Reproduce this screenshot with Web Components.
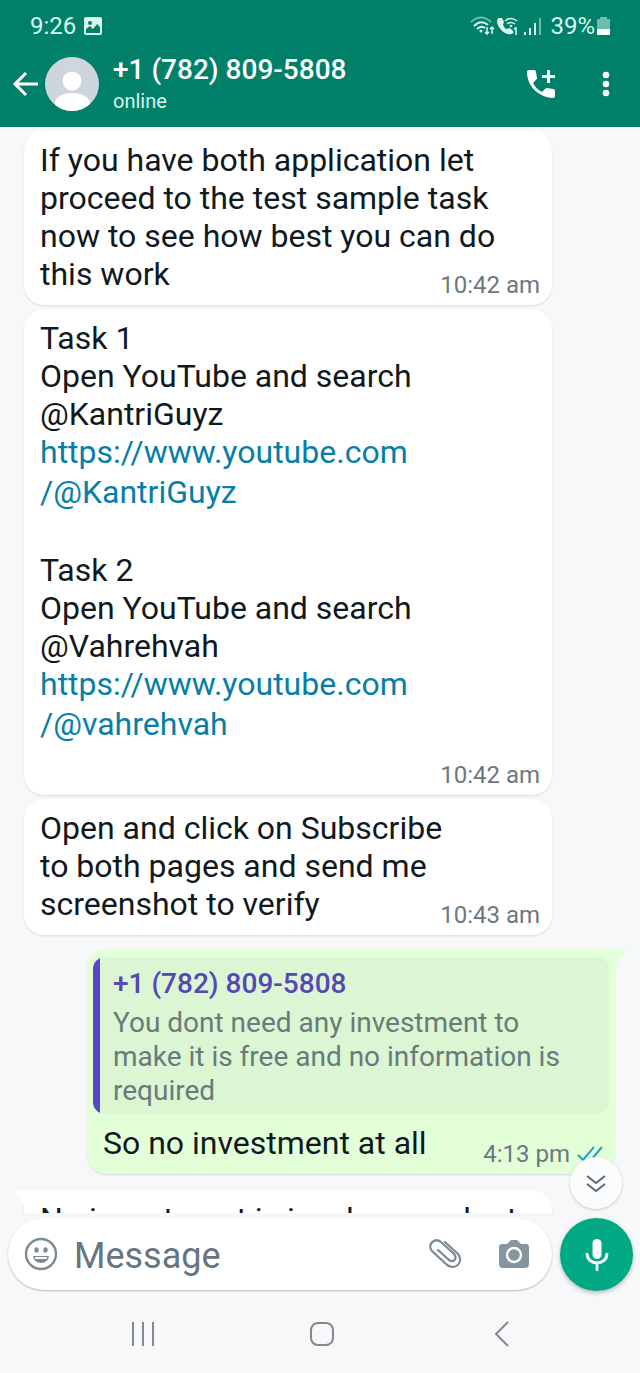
<!DOCTYPE html>
<html lang="en">
<head>
<meta charset="utf-8">
<meta name="viewport" content="width=device-width, initial-scale=1">
<title>Chat</title>
<style>
    body{
        margin:0;
        font-family:Roboto, sans-serif;
        color:#10191e;
        background:#f7f8fa;
    }
</style>
</head>
<body>
<chat-app>
    <status-bar slot="top" data-time="9:26" data-battery="39%"></status-bar>
    <chat-header slot="top" data-name="+1 (782) 809-5808" data-status="online"></chat-header>

    <chat-bubble data-time="10:42 am">If you have both application let<br>proceed to the test sample task<br>now to see how best you can do<br>this work</chat-bubble>
    <chat-bubble data-time="10:42 am" data-below>Task 1<br>Open YouTube and search<br>@KantriGuyz<br><chat-link data-href="https://www.youtube.com/@KantriGuyz">https://www.youtube.com<span slot="rest">/@KantriGuyz</span></chat-link><br>Task 2<br>Open YouTube and search<br>@Vahrehvah<br><chat-link data-href="https://www.youtube.com/@vahrehvah">https://www.youtube.com<span slot="rest">/@vahrehvah</span></chat-link></chat-bubble>
    <chat-bubble data-time="10:43 am">Open and click on Subscribe<br>to both pages and send me<br>screenshot to verify</chat-bubble>
    <chat-bubble data-time="4:13 pm" data-sent data-tail>
        <chat-quote slot="quote" data-name="+1 (782) 809-5808">You dont need any investment to make it is free and no information is required</chat-quote>
        So no investment at all
    </chat-bubble>
    <chat-bubble data-time="4:14 pm" data-tail data-below>No investment is involve you dont</chat-bubble>

    <chat-composer slot="bottom"></chat-composer>
    <nav-bar slot="bottom"></nav-bar>
</chat-app>

<script>
const reset=`
    :host, *{
        box-sizing:border-box;
    }
    button{
        display:flex;
        align-items:center;
        justify-content:center;
        padding:0;
        border:0;
        background:none;
        color:inherit;
        font:inherit;
        cursor:pointer;
    }
    svg{
        display:block;
        flex:none;
    }
`;

class ChatElement extends HTMLElement {
    constructor() {
        super();
        this.attachShadow({mode:'open'});
    }

    connectedCallback() {
        this.shadowRoot.innerHTML=`<style>${reset}</style>${this.getTemplate(this.dataset)}`;
    }
}

class ChatApp extends ChatElement {
    getTemplate() {
        return `
            <style>
                :host{
                    display:flex;
                    flex-direction:column;
                    height:100vh;
                }
                header{
                    flex:none;
                    background:#008069;
                    color:#fff;
                }
                main{
                    position:relative;
                    flex:1;
                    min-height:0;
                }
                .list{
                    display:flex;
                    flex-direction:column;
                    gap:4px;
                    height:100%;
                    padding:4px 24px 0;
                    overflow:hidden;
                }
                /* floats over the message list */
                .down{
                    position:absolute;
                    right:18px;
                    bottom:4px;
                    width:52px;
                    height:52px;
                    border-radius:50%;
                    background:#fbfcfd;
                    box-shadow:0 1px 3px rgba(0,0,0,.2);
                }
                footer{
                    flex:none;
                }
            </style>
            <header><slot name="top"></slot></header>
            <main>
                <div class="list"><slot></slot></div>
                <button class="down" aria-label="Scroll to bottom">
                    <svg width="20" height="20" viewBox="0 0 20 20" fill="none" stroke="#5e6a72" stroke-width="2"><path d="M1 3l9 7 9-7M1 11l9 7 9-7"/></svg>
                </button>
            </main>
            <footer><slot name="bottom"></slot></footer>
        `;
    }
}

class StatusBar extends ChatElement {
    getTemplate(data) {
        return `
            <style>
                :host{
                    display:flex;
                    align-items:center;
                    height:52px;
                    padding:0 30px;
                    font-size:24px;
                    color:#d9f7ef;
                }
                .photo{
                    margin-left:8px;
                }
                .right{
                    display:flex;
                    align-items:center;
                    gap:8px;
                    margin-left:auto;
                }
                .level{
                    display:flex;
                    align-items:center;
                    gap:2px;
                }
            </style>
            <span>${data.time}</span>
            <svg class="photo" width="18" height="18" viewBox="0 0 18 18"><rect width="18" height="18" rx="2" fill="currentColor"/><circle cx="6" cy="6" r="2" fill="#008069"/><path d="M2 12l4-3 3 3 4-5 3 3v6H2z" fill="#008069"/></svg>
            <div class="right">
                <svg width="72" height="20" viewBox="0 0 72 20" fill="none" stroke="currentColor" stroke-width="2">
                    <path d="M1 6Q11-3 21 6" opacity=".5"/><path d="M4 10Q11 3 18 9M7 13Q11 9 15 12"/>
                    <circle cx="11" cy="15" r="1.5" fill="currentColor" stroke="none"/>
                    <path d="M17 11v7M15 16l2 2 2-2M22 18v-7M20 13l2-2 2 2" stroke-width="1.5"/>
                    <path d="M29 2c-3 1-2 6 0 9 3 5 8 8 12 7 2 0 3-2 2-3l-3-3-4 1c-1-1-2-2-3-4l1-3-2-4z" fill="currentColor" stroke="none"/>
                    <path d="M35 5Q41 0 47 5M37 8Q41 5 45 8" stroke-width="1.5"/><circle cx="41" cy="10" r="1.3" fill="currentColor" stroke="none"/>
                    <path d="M44 13l2-1v7" stroke-width="1.5"/>
                    <path d="M55 16v3M60 12v7M65 7v12"/><path d="M70 2v17" opacity=".5"/>
                </svg>
                <div class="level">
                    <span>${data.battery}</span>
                    <svg width="13" height="20" viewBox="0 0 13 20"><path d="M3 1h7v2h3v10H0V3h3z" fill="currentColor" opacity=".5"/><path d="M0 13h13v5q0 1-1 1H1q-1 0-1-1z" fill="#fff"/></svg>
                </div>
            </div>
        `;
    }
}

class ChatHeader extends ChatElement {
    getTemplate(data) {
        return `
            <style>
                :host{
                    display:flex;
                    align-items:center;
                    height:75px;
                    padding:0 18px 12px 12px;
                }
                .avatar{
                    margin-left:6px;
                }
                .who{
                    flex:1;
                    margin-left:14px;
                }
                h1{
                    margin:0;
                    font-size:28px;
                    font-weight:500;
                    line-height:34px;
                }
                p{
                    margin:0;
                    font-size:20px;
                    line-height:28px;
                    color:#d4f5ec;
                }
                .call{
                    margin-right:34px;
                }
                .menu{
                    width:32px;
                    height:40px;
                }
            </style>
            <button aria-label="Back">
                <svg width="27" height="28" viewBox="0 0 27 28" fill="none" stroke="currentColor" stroke-width="3"><path d="M26 14H4M14 3L3 14l11 11"/></svg>
            </button>
            <svg class="avatar" width="54" height="54" viewBox="0 0 54 54">
                <defs><clipPath id="round"><circle cx="27" cy="27" r="27"/></clipPath></defs>
                <g clip-path="url(#round)"><rect width="54" height="54" fill="#cfd5dd"/><circle cx="27" cy="24" r="9.5" fill="#fff"/><path d="M10 50V46c0-6 8-10 17-10s18 4 18 10v8H10z" fill="#fff"/></g>
            </svg>
            <div class="who">
                <h1>${data.name}</h1>
                <p>${data.status}</p>
            </div>
            <button class="call" aria-label="Add call">
                <svg width="30" height="30" viewBox="0 0 30 30" fill="currentColor"><path d="M3 1h5q2 0 2 2l1 6q0 1-1 2l-3 3c2 4 5 7 9 9l3-3q1-1 2-1l6 1q2 0 2 2v5q0 2-2 2C12 28 1 17 1 3q0-2 2-2z"/><path d="M21 1h3v5h5v3h-5v5h-3V9h-5V6h5z"/></svg>
            </button>
            <button class="menu" aria-label="More options">
                <svg width="8" height="28" viewBox="0 0 8 28" fill="currentColor"><circle cx="4" cy="5" r="3.3"/><circle cx="4" cy="14" r="3.3"/><circle cx="4" cy="23" r="3.3"/></svg>
            </button>
        `;
    }
}

class ChatBubble extends ChatElement {
    getTemplate(data) {
        const sent='sent' in data;
        const tail=sent
            ? '<svg class="tail" width="14" height="18" viewBox="0 0 14 18"><path d="M0 0h11q2 0 1 2L0 18z" fill="#e2ffd8"/></svg>'
            : '<svg class="tail" width="14" height="18" viewBox="0 0 14 18"><path d="M14 0H3Q1 0 2 2l12 16z" fill="#fff"/></svg>';
        const ticks='<svg width="26" height="18" viewBox="0 0 26 18" fill="none" stroke="#2f9fc9" stroke-width="2"><path d="M1 10l5 5L17 2M12 13l2 2L25 2"/></svg>';
        return `
            <style>
                :host{
                    position:relative;
                    display:block;
                    flex:none;
                    width:calc(100% - 64px);
                    border-radius:20px;
                    background:#fff;
                    box-shadow:0 1px 2px rgba(0,0,0,.12);
                    font-size:32px;
                    line-height:38px;
                }
                :host([data-sent]){
                    align-self:flex-end;
                    margin:10px 1px 0 0;
                    padding-top:8px;
                    background:#e2ffd8;
                }
                :host([data-sent][data-tail]){
                    border-top-right-radius:0;
                }
                :host([data-tail]:not([data-sent])){
                    margin-top:12px;
                    border-top-left-radius:0;
                }
                .body{
                    display:grid;
                    padding:10px 12px 6px 16px;
                }
                .text, .meta{
                    grid-area:1 / 1;
                }
                .text{
                    padding-bottom:6px;
                }
                .meta{
                    display:flex;
                    align-items:center;
                    gap:7px;
                    place-self:end;
                    font-size:24px;
                    line-height:28px;
                    color:#6c7880;
                }
                :host([data-below]) .meta{
                    grid-area:2 / 1;
                    margin-top:10px;
                }
                .tail{
                    position:absolute;
                    top:0;
                    left:-11px;
                }
                :host([data-sent]) .tail{
                    left:auto;
                    right:-13px;
                }
            </style>
            ${'tail' in data ? tail : ''}
            <slot name="quote"></slot>
            <div class="body">
                <div class="text"><slot></slot></div>
                <div class="meta"><span>${data.time}</span>${sent ? ticks : ''}</div>
            </div>
        `;
    }
}

class ChatQuote extends ChatElement {
    getTemplate(data) {
        return `
            <style>
                :host{
                    display:block;
                    margin:0 6px;
                    padding:10px 20px 6px 20px;
                    border-radius:12px;
                    background:linear-gradient(to right, #5746c7 7px, #dcf5d3 7px);
                    font-size:28px;
                    line-height:34px;
                    color:#687b7c;
                }
                strong{
                    display:block;
                    margin-bottom:5px;
                    font-weight:500;
                    color:#5547b5;
                }
            </style>
            <strong>${data.name}</strong>
            <slot></slot>
        `;
    }
}

class ChatLink extends ChatElement {
    getTemplate(data) {
        return `
            <style>
                :host{
                    display:block;
                }
                a{
                    color:#087ea6;
                    text-decoration:none;
                }
                .rest{
                    display:block;
                    line-height:42px;
                }
            </style>
            <a href="${data.href}"><slot></slot><span class="rest"><slot name="rest"></slot></span></a>
        `;
    }
}

class ChatComposer extends ChatElement {
    getTemplate() {
        return `
            <style>
                :host{
                    display:flex;
                    gap:8px;
                    padding:5px 7px 0 8px;
                }
                .field{
                    display:flex;
                    flex:1;
                    align-items:center;
                    min-width:0;
                    height:72px;
                    padding:0 22px 0 16px;
                    border-radius:36px;
                    background:#fff;
                    box-shadow:0 1px 2px rgba(0,0,0,.25);
                }
                input{
                    flex:1;
                    min-width:0;
                    margin:0 16px;
                    padding:4px 0 0;
                    border:0;
                    outline:0;
                    background:none;
                    font:36px Roboto, sans-serif;
                    color:#10191e;
                }
                input::placeholder{
                    color:#66757f;
                    opacity:1;
                }
                .camera{
                    margin-left:36px;
                }
                .mic{
                    flex:none;
                    width:73px;
                    height:73px;
                    border-radius:50%;
                    background:#00a884;
                    color:#fff;
                    box-shadow:0 2px 4px rgba(0,0,0,.25);
                }
            </style>
            <div class="field">
                <button aria-label="Emoji">
                    <svg width="34" height="34" viewBox="0 0 34 34"><circle cx="17" cy="17" r="15" fill="none" stroke="#7b8a94" stroke-width="2.4"/><ellipse cx="12.5" cy="13" rx="2.2" ry="2.7" fill="#7b8a94"/><ellipse cx="21.5" cy="13" rx="2.2" ry="2.7" fill="#7b8a94"/><path d="M9 19h16q-1 7-8 7t-8-7z" fill="#7b8a94"/><path d="M11 20h12v2H11z" fill="#fff"/></svg>
                </button>
                <input type="text" placeholder="Message" aria-label="Message">
                <button aria-label="Attach">
                    <svg width="34" height="32" viewBox="0 0 34 32" fill="none" stroke="#7b8a94" stroke-width="2.2" stroke-linecap="round"><path d="M17 4l13 12c4 5 2 12-5 13-3 0-5-1-7-3L4 13C-1 7 6-1 13 4l13 12c4 5-1 9-5 6L10 12"/></svg>
                </button>
                <button class="camera" aria-label="Camera">
                    <svg width="32" height="32" viewBox="0 0 32 32"><path d="M11 4l2-2h6l2 2 2 2h5q3 0 3 3v17q0 4-4 4H5q-4 0-4-4V9q0-3 3-3h5z" fill="#84959f"/><circle cx="16" cy="17" r="7" fill="none" stroke="#fff" stroke-width="2.4"/></svg>
                </button>
            </div>
            <button class="mic" aria-label="Record voice message">
                <svg width="24" height="32" viewBox="0 0 24 32"><rect x="7.5" y="0" width="9" height="20" rx="4.5" fill="currentColor"/><path d="M2 14q0 9 10 10 10-1 10-10M12 24v8" fill="none" stroke="currentColor" stroke-width="2.8"/></svg>
            </button>
        `;
    }
}

class NavBar extends ChatElement {
    getTemplate() {
        return `
            <style>
                :host{
                    display:grid;
                    grid-template-columns:repeat(3, 1fr);
                    height:82px;
                    padding:0 48px 0 53px;
                    color:#84878b;
                }
                button{
                    height:86px;
                }
            </style>
            <button aria-label="Recent apps"><svg width="24" height="24" viewBox="0 0 24 24" stroke="currentColor" stroke-width="2"><path d="M2 0v24M12 0v24M22 0v24"/></svg></button>
            <button aria-label="Home"><svg width="26" height="26" viewBox="0 0 26 26" fill="none" stroke="currentColor" stroke-width="2"><rect x="2" y="2" width="22" height="22" rx="7"/></svg></button>
            <button aria-label="Back"><svg width="16" height="26" viewBox="0 0 16 26" fill="none" stroke="currentColor" stroke-width="2"><path d="M14 1L2 13l12 12"/></svg></button>
        `;
    }
}

customElements.define('chat-app', ChatApp);
customElements.define('status-bar', StatusBar);
customElements.define('chat-header', ChatHeader);
customElements.define('chat-bubble', ChatBubble);
customElements.define('chat-quote', ChatQuote);
customElements.define('chat-link', ChatLink);
customElements.define('chat-composer', ChatComposer);
customElements.define('nav-bar', NavBar);
</script>
</body>
</html>
